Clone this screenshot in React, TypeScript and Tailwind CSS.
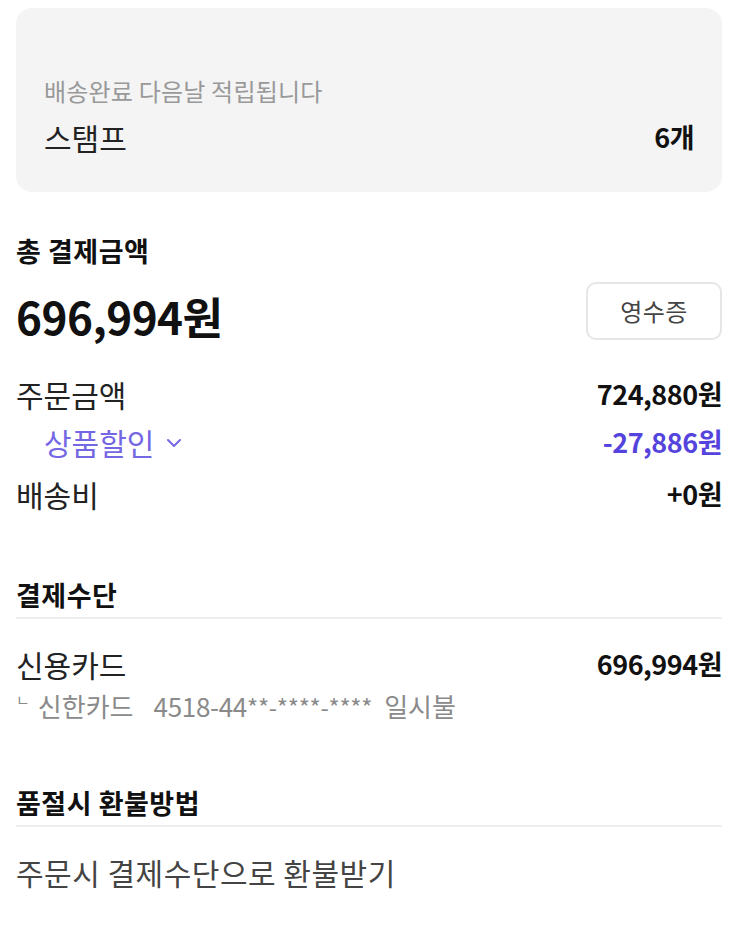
const font = "font-['Noto_Sans_CJK_KR','Noto_Sans',sans-serif]";

type AmountRowProps = {
  label: string;
  value: string;
  purple?: boolean;
  chevron?: boolean;
};

function AmountRow({ label, value, purple = false, chevron = false }: AmountRowProps) {
  return (
    <div className="flex h-[36px] items-center justify-between">
      <div
        className={`flex items-center gap-[12px] text-[30px] leading-[36px] ${
          purple ? 'pl-[28px] text-[#7467e4]' : 'text-[#222]'
        }`}
      >
        <span>{label}</span>
        {chevron && (
          <svg width="16" height="10" viewBox="0 0 16 10" className="mt-[2px]">
            <path
              d="M2 2 L8 8 L14 2"
              fill="none"
              stroke="#7467e4"
              strokeWidth="2"
              strokeLinecap="round"
              strokeLinejoin="round"
            />
          </svg>
        )}
      </div>
      <span
        className={`text-[27px] font-bold leading-[36px] tracking-[-0.5px] ${
          purple ? 'text-[#5443dc]' : 'text-[#111]'
        }`}
      >
        {value}
      </span>
    </div>
  );
}

function SectionTitle({ children }: { children: string }) {
  return (
    <div className="border-b-2 border-[#eeeeee] pb-[7px] text-[27px] font-bold leading-[30px] tracking-[0.5px] text-[#111]">
      {children}
    </div>
  );
}

export default function App() {
  return (
    <div className={`${font} h-[929px] w-[750px] overflow-hidden bg-white pl-4 pr-[28px]`}>
      {/* 스탬프 카드 */}
      <div className="mt-2 h-[184px] rounded-2xl bg-[#f4f4f4] px-[28px] pt-[69px]">
        <p className="text-[24px] leading-[28px] tracking-[0.2px] text-[#999]">배송완료 다음날 적립됩니다</p>
        <div className="mt-[14px] flex items-center justify-between">
          <span className="text-[30px] leading-[36px] text-[#222]">스탬프</span>
          <span className="text-[27px] font-bold leading-[36px] tracking-[-0.5px] text-[#111]">
            6개
          </span>
        </div>
      </div>

      {/* 총 결제금액 */}
      <div className="mt-[44px] text-[27px] font-bold leading-[30px] tracking-[0.5px] text-[#111]">
        총 결제금액
      </div>
      <div className="mt-4 flex items-start justify-between">
        <span className="mt-[8px] text-[44px] font-bold leading-[52px] tracking-[-0.5px] text-[#111]">
          696,994원
        </span>
        <button className="flex h-[58px] w-[136px] items-center justify-center rounded-[10px] border-2 border-[#e6e6e6] bg-white text-[24px] tracking-[0.5px] text-[#444]">
          영수증
        </button>
      </div>

      <div className="mt-[34px]">
        <AmountRow label="주문금액" value="724,880원" />
        <div className="mt-[12px]">
          <AmountRow label="상품할인" value="-27,886원" purple chevron />
        </div>
        <div className="mt-[16px]">
          <AmountRow label="배송비" value="+0원" />
        </div>
      </div>

      {/* 결제수단 */}
      <div className="mt-[68px]">
        <SectionTitle>결제수단</SectionTitle>
      </div>
      <div className="mt-[27px]">
        <AmountRow label="신용카드" value="696,994원" />
      </div>
      <p className="mt-[9px] flex items-start text-[26px] leading-[30px] text-[#8a8a8a]">
        <span className="mr-[8px] text-[15px] leading-[18px]">ㄴ</span>
        <span>신한카드</span>
        <span className="ml-[20px] tracking-[-0.3px]">
          4518-44<span className="text-[24px]">**-****-****</span>
        </span>
        <span className="ml-[12px]">일시불</span>
      </p>

      {/* 품절시 환불방법 */}
      <div className="mt-[66px]">
        <SectionTitle>품절시 환불방법</SectionTitle>
      </div>
      <p className="mt-[27px] text-[30px] leading-[36px] tracking-[0.5px] text-[#444]">
        주문시 결제수단으로 환불받기
      </p>
    </div>
  );
}
